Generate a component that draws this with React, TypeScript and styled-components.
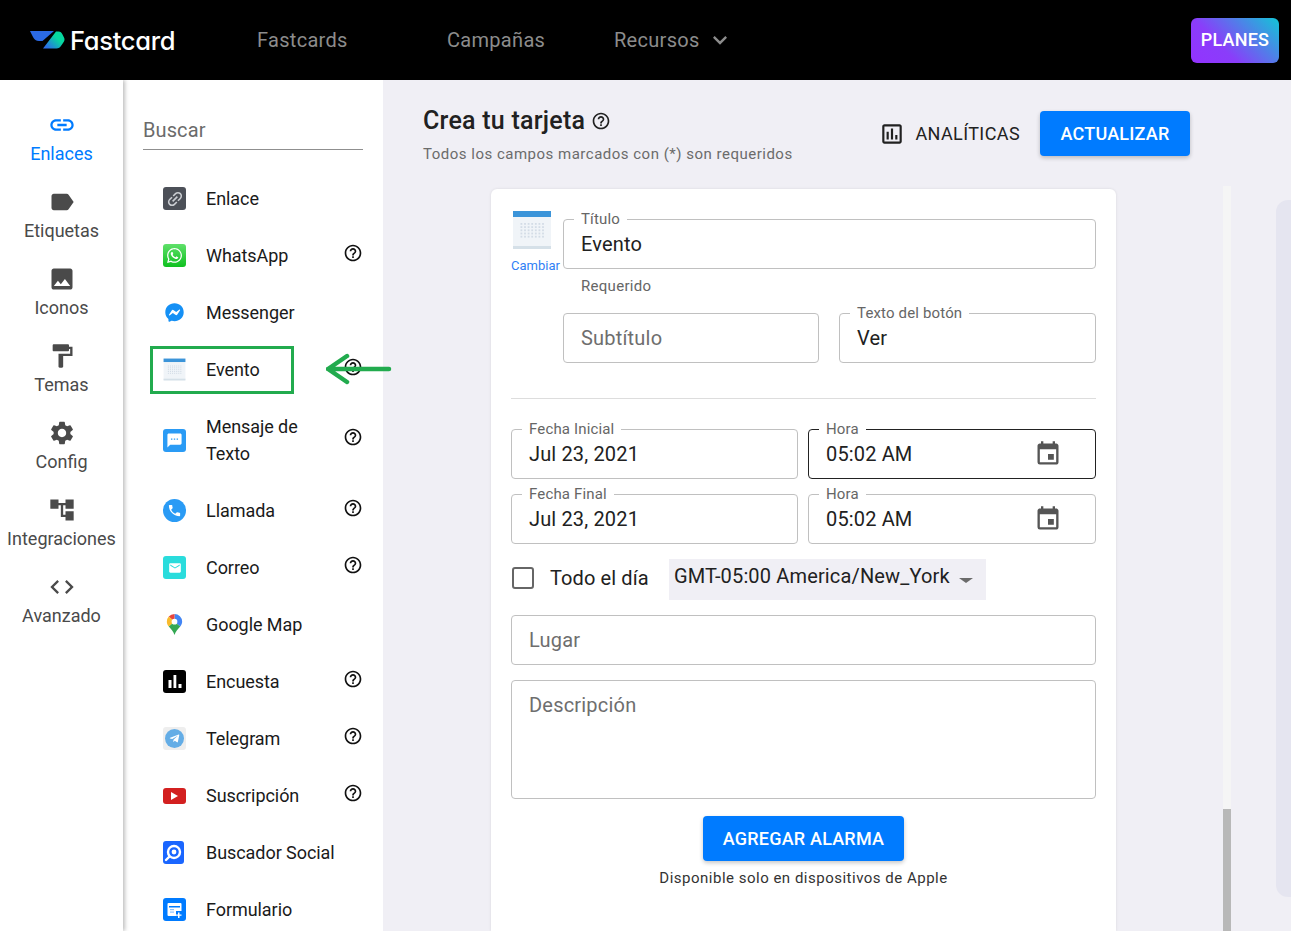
import styled, { createGlobalStyle } from "styled-components";
import type { ReactNode } from "react";
import {
  MdAccountTree,
  MdCode,
  MdEmail,
  MdEvent,
  MdExpandMore,
  MdFormatPaint,
  MdHelpOutline,
  MdImage,
  MdLabel,
  MdLink,
  MdOutlineAssessment,
  MdPhone,
  MdSettings,
  MdSms,
} from "react-icons/md";
import { FaFacebookMessenger, FaTelegramPlane, FaWhatsapp } from "react-icons/fa";

const GlobalStyle = createGlobalStyle`
  html, body {
    margin: 0;
    height: 100%;
    overflow: hidden;
  }
  body {
    font-family: Roboto, "Liberation Sans", sans-serif;
    background: #f0eff5;
    color: #212121;
  }
  * {
    box-sizing: border-box;
  }
`;

function Logo() {
  return (
    <svg width="35" height="18" viewBox="0 0 35 18">
      <defs>
        <linearGradient id="logoGrad" x1="0" y1="1" x2="1" y2="0.2">
          <stop offset="0.15" stopColor="#2b6fe8" />
          <stop offset="0.7" stopColor="#06d8a0" />
        </linearGradient>
      </defs>
      <path d="M0 0h24L12.500 10H9C6 10 4.500 8.500 3 6z" fill="#2b6ae6" />
      <path d="M13 17.500L26 .5h2.500c2 0 3 1 4 3 1 2 2 3.500 2 5 0 1.500-1 3-2.500 5-2 3-3.500 4-5.500 4z" fill="url(#logoGrad)" />
    </svg>
  );
}

function CalendarArt({ size }: { size: number }) {
  const dots = [];
  for (let r = 0; r < 5; r++) {
    for (let c = 0; c < 7; c++) {
      dots.push(<rect key={`${r}-${c}`} x={8.5 + c * 3.6} y={13 + r * 3.2} width="1.800" height="1.800" fill="#d3dce6" />);
    }
  }
  return (
    <svg width={size} height={size} viewBox="0 0 40 40">
      <rect x="1" y="1" width="38" height="38" fill="#f0f4f8" />
      <rect x="1" y="1" width="38" height="6" fill="#3b94d9" />
      <rect x="1" y="36" width="38" height="3" fill="#d5e0e8" />
      {dots}
    </svg>
  );
}

function MapPin() {
  return (
    <svg width="23" height="23" viewBox="0 0 24 24">
      <path d="M12 1a8 8 0 0 1 8 8c0 2-1 3.500-2 5l-6-5z" fill="#4285f4" />
      <path d="M12 1a8 8 0 0 0-6 2.700L12 9z" fill="#e8453c" />
      <path d="M6 3.700A8 8 0 0 0 4 9c0 2 .8 3.400 2 5l6-5z" fill="#f9bb2d" />
      <path d="M6 14c2 2.600 5 5 6 9 1-4 4-6.500 6-9l-6-5z" fill="#34a853" />
      <circle cx="12" cy="9" r="3" fill="#fff" />
    </svg>
  );
}

const LinkBadge = styled.span<{ $bg: string; $size?: number; $round?: boolean; $short?: boolean }>`
  width: 23px;
  height: ${(p) => (p.$short ? "16px" : "23px")};
  border-radius: ${(p) => (p.$round ? "50%" : "3px")};
  background: ${(p) => p.$bg};
  color: #fff;
  display: flex;
  align-items: center;
  justify-content: center;
  font-size: ${(p) => p.$size ?? 16}px;
`;

const LinkGlyph = styled(MdLink)`
  transform: rotate(-45deg);
  color: #c9ccd1;
`;

const TelegramDisc = styled.span`
  width: 19px;
  height: 19px;
  border-radius: 50%;
  background: #64ade6;
  color: #fff;
  display: flex;
  align-items: center;
  justify-content: center;
  font-size: 11px;
`;

const Triangle = styled.span`
  width: 0;
  height: 0;
  border-left: 7px solid #fff;
  border-top: 4px solid transparent;
  border-bottom: 4px solid transparent;
`;

const Bars = () => (
  <svg width="23" height="23" viewBox="0 0 23 23">
    <rect width="23" height="23" rx="3" fill="#000" />
    <rect x="5.500" y="10" width="3" height="8" fill="#fff" />
    <rect x="10.500" y="5" width="2.800" height="13" fill="#fff" />
    <rect x="15.500" y="14" width="3" height="4" fill="#fff" />
  </svg>
);

const SearchRing = () => (
  <svg width="21" height="23" viewBox="0 0 21 23">
    <rect width="21" height="23" rx="3" fill="#1a66ff" />
    <circle cx="11" cy="11" r="6" fill="none" stroke="#fff" strokeWidth="2.400" />
    <circle cx="11" cy="11" r="2.400" fill="#fff" />
    <path d="M6.500 15.500L3 19" stroke="#fff" strokeWidth="2.400" strokeLinecap="round" />
  </svg>
);

const FormGlyph = () => (
  <svg width="15" height="16" viewBox="0 0 15 16">
    <path d="M1.500 1h12a1 1 0 0 1 1 1v7H9v5H1.500a1 1 0 0 1-1-1V2a1 1 0 0 1 1-1z" fill="#fff" />
    <rect x="2" y="4" width="11" height="1.500" fill="#007bff" />
    <rect x="3" y="7" width="4" height="1.200" fill="#8cc2ff" />
    <rect x="3" y="9.500" width="4" height="1.200" fill="#8cc2ff" />
    <path d="M11 10.500h1.500v2h2v1.300h-2V16H11v-2.200H9v-1.300h2z" fill="#fff" />
  </svg>
);

type CardLink = { name: string; help?: boolean; marked?: boolean; icon: ReactNode };

const rail = [
  { name: "Enlaces", icon: <MdLink />, active: true },
  { name: "Etiquetas", icon: <MdLabel /> },
  { name: "Iconos", icon: <MdImage /> },
  { name: "Temas", icon: <MdFormatPaint /> },
  { name: "Config", icon: <MdSettings /> },
  { name: "Integraciones", icon: <MdAccountTree /> },
  { name: "Avanzado", icon: <MdCode /> },
];

const links: CardLink[] = [
  { name: "Enlace", icon: <LinkBadge $bg="#4c5058" $size={20}><LinkGlyph /></LinkBadge> },
  { name: "WhatsApp", help: true, icon: <LinkBadge $bg="linear-gradient(#5fe06a,#0fc01f)" $size={17}><FaWhatsapp /></LinkBadge> },
  { name: "Messenger", icon: <LinkBadge $bg="transparent" $size={19}><FaFacebookMessenger color="#1590f5" /></LinkBadge> },
  { name: "Evento", help: true, marked: true, icon: <CalendarArt size={23} /> },
  { name: "Mensaje de Texto", help: true, icon: <LinkBadge $bg="#2a9bf5" $size={17}><MdSms /></LinkBadge> },
  { name: "Llamada", help: true, icon: <LinkBadge $bg="#2a9bf5" $round $size={15}><MdPhone /></LinkBadge> },
  { name: "Correo", help: true, icon: <LinkBadge $bg="#2adcdc" $size={14}><MdEmail /></LinkBadge> },
  { name: "Google Map", icon: <MapPin /> },
  { name: "Encuesta", help: true, icon: <Bars /> },
  { name: "Telegram", help: true, icon: <LinkBadge $bg="#eeeeee"><TelegramDisc><FaTelegramPlane /></TelegramDisc></LinkBadge> },
  { name: "Suscripción", help: true, icon: <LinkBadge $bg="#d32020" $short><Triangle /></LinkBadge> },
  { name: "Buscador Social", icon: <SearchRing /> },
  { name: "Formulario", icon: <LinkBadge $bg="#007bff"><FormGlyph /></LinkBadge> },
];

export default function App() {
  return (
    <Page>
      <GlobalStyle />
      <TopBar>
        <Brand>
          <Logo />
          <BrandName>Fastcard</BrandName>
        </Brand>
        <NavItem $width={190}>Fastcards</NavItem>
        <NavItem $width={167}>Campañas</NavItem>
        <NavItem>
          Recursos
          <MdExpandMore size={28} />
        </NavItem>
        <Plans>PLANES</Plans>
      </TopBar>

      <Body>
        <Rail>
          {rail.map((item) => (
            <RailItem key={item.name} $active={item.active}>
              {item.icon}
              <span>{item.name}</span>
            </RailItem>
          ))}
        </Rail>

        <LinkPanel>
          <Search>Buscar</Search>
          {links.map((link) => (
            <LinkRow key={link.name}>
              <LinkIcon>{link.icon}</LinkIcon>
              <LinkName>{link.name}</LinkName>
              {link.help && <RowHelp />}
              {link.marked && (
                <>
                  <MarkBox />
                  <MarkArrow width="66" height="32" viewBox="0 0 66 32">
                    <path
                      d="M63 16H2M2 16L21 3M2 16l19 13"
                      fill="none"
                      stroke="#22ab4e"
                      strokeWidth="4.500"
                      strokeLinecap="round"
                    />
                  </MarkArrow>
                </>
              )}
            </LinkRow>
          ))}
        </LinkPanel>

        <Main>
          <Editor>
            <EditorHead>
              <div>
                <Title>
                  Crea tu tarjeta
                  <MdHelpOutline size={20} />
                </Title>
                <Hint>Todos los campos marcados con (*) son requeridos</Hint>
              </div>
              <Actions>
                <Analytics>
                  <MdOutlineAssessment size={26} />
                  ANALÍTICAS
                </Analytics>
                <PrimaryButton $width={150}>ACTUALIZAR</PrimaryButton>
              </Actions>
            </EditorHead>

            <EditorScroll>
              <Card>
                <TitleBlock>
                  <IconPicker>
                    <CalendarArt size={40} />
                    <span>Cambiar</span>
                  </IconPicker>
                  <TitleFields>
                    <Field $label="Título">
                      <Value>Evento</Value>
                    </Field>
                    <Helper>Requerido</Helper>
                    <TwoCols>
                      <Field>
                        <Placeholder>Subtítulo</Placeholder>
                      </Field>
                      <Field $label="Texto del botón">
                        <Value>Ver</Value>
                      </Field>
                    </TwoCols>
                  </TitleFields>
                </TitleBlock>

                <Divider />

                <FormStack>
                  <DateGrid>
                    <Field $label="Fecha Inicial">
                      <Value>Jul 23, 2021</Value>
                    </Field>
                    <Field $label="Hora" $focused>
                      <Value>05:02 AM</Value>
                      <MdEvent size={28} color="#555" />
                    </Field>
                    <Field $label="Fecha Final">
                      <Value>Jul 23, 2021</Value>
                    </Field>
                    <Field $label="Hora">
                      <Value>05:02 AM</Value>
                      <MdEvent size={28} color="#555" />
                    </Field>
                  </DateGrid>

                  <AllDayRow>
                    <CheckBox />
                    <AllDayLabel>Todo el día</AllDayLabel>
                    <TimezoneSelect>
                      GMT-05:00 America/New_York
                      <Caret />
                    </TimezoneSelect>
                  </AllDayRow>

                  <Field>
                    <Placeholder>Lugar</Placeholder>
                  </Field>
                  <TextArea>
                    <Placeholder>Descripción</Placeholder>
                  </TextArea>
                </FormStack>

                <AlarmBlock>
                  <PrimaryButton $width={201}>AGREGAR ALARMA</PrimaryButton>
                  <AlarmNote>Disponible solo en dispositivos de Apple</AlarmNote>
                </AlarmBlock>
              </Card>
              <ScrollTrack>
                <ScrollThumb />
              </ScrollTrack>
            </EditorScroll>
          </Editor>
          <Preview />
        </Main>
      </Body>
    </Page>
  );
}

function Field({ $label, $focused, children }: { $label?: string; $focused?: boolean; children: ReactNode }) {
  return (
    <FieldBox $focused={$focused}>
      {$label && <FieldLabel>{$label}</FieldLabel>}
      {children}
    </FieldBox>
  );
}

// Style
const Page = styled.div`
  height: 100vh;
  display: flex;
  flex-direction: column;
  overflow: hidden;
`;

const TopBar = styled.header`
  height: 80px;
  flex: none;
  background: #000;
  display: flex;
  align-items: center;
  padding: 0 12px 0 30px;
`;

const Brand = styled.div`
  width: 227px;
  display: flex;
  align-items: center;
  gap: 5px;
`;

const BrandName = styled.span`
  font-family: Inter, sans-serif;
  font-feature-settings: "cv11";
  font-size: 25.500px;
  font-weight: 500;
  letter-spacing: -0.3px;
  color: #fff;
`;

const NavItem = styled.div<{ $width?: number }>`
  width: ${(p) => (p.$width ? `${p.$width}px` : "auto")};
  display: flex;
  align-items: center;
  gap: 6px;
  font-size: 20px;
  letter-spacing: 0.3px;
  color: #8c8c8c;
`;

const Plans = styled.div`
  margin-left: auto;
  width: 88px;
  height: 45px;
  padding-bottom: 2px;
  border-radius: 6px;
  background: linear-gradient(45deg, #9333ff 0%, #8a3dfa 35%, #12c6d6 100%);
  color: #fff;
  font-size: 18px;
  font-weight: 500;
  letter-spacing: 0.2px;
  display: flex;
  align-items: center;
  justify-content: center;
`;

const Body = styled.div`
  flex: 1;
  min-height: 0;
  display: flex;
`;

const Rail = styled.nav`
  width: 123px;
  flex: none;
  background: #fff;
  padding-top: 33px;
  box-shadow: 2px 0 4px rgba(0, 0, 0, 0.25);
  position: relative;
  z-index: 2;
`;

const RailItem = styled.div<{ $active?: boolean }>`
  height: 77px;
  display: flex;
  flex-direction: column;
  align-items: center;
  color: ${(p) => (p.$active ? "#007bff" : "#4a4a4a")};
  font-size: 18px;
  line-height: 24px;

  svg {
    width: 28px;
    height: 28px;
    margin: -2px 0 3px;
  }
`;

const LinkPanel = styled.aside`
  width: 260px;
  flex: none;
  position: relative;
  z-index: 1;
  background: #fff;
  padding: 0 20px;
`;

const Search = styled.div`
  height: 47px;
  margin: 23px 0 20px;
  padding-top: 13px;
  border-bottom: 1px solid #8f8f8f;
  font-size: 20px;
  line-height: 28px;
  letter-spacing: 0.1px;
  color: #6b6b6b;
`;

const LinkRow = styled.div`
  position: relative;
  display: flex;
  align-items: center;
  padding: 15px 0 15px 20px;
`;

const LinkIcon = styled.div`
  width: 43px;
  flex: none;
  display: flex;
  align-items: center;
`;

const LinkName = styled.div`
  flex: 1;
  font-size: 18px;
  line-height: 27px;
  letter-spacing: -0.06px;
  color: #1a1a1a;
`;

const RowHelp = styled(MdHelpOutline)`
  width: 20px;
  height: 20px;
  flex: none;
  margin: 0 0 6px 16px;
  color: #111;
`;

const MarkBox = styled.div`
  position: absolute;
  left: 7px;
  top: 5px;
  width: 144px;
  height: 48px;
  border: 3px solid #22ab4e;
`;

const MarkArrow = styled.svg`
  position: absolute;
  left: 183px;
  top: 12px;
`;

const Main = styled.main`
  flex: 1;
  min-width: 0;
  display: flex;
`;

const Editor = styled.section`
  width: 848px;
  flex: none;
  display: flex;
  flex-direction: column;
`;

const EditorHead = styled.div`
  height: 106px;
  flex: none;
  width: 767px;
  margin-left: 40px;
  padding-top: 25px;
  display: flex;
  justify-content: space-between;
  align-items: flex-start;
`;

const Title = styled.h1`
  margin: 0;
  font-size: 25px;
  line-height: 32px;
  font-weight: 500;
  letter-spacing: 0.25px;
  display: flex;
  align-items: center;
  gap: 6px;
`;

const Hint = styled.p`
  margin: 7px 0 0;
  font-size: 15px;
  line-height: 20px;
  letter-spacing: 0.5px;
  color: #6b6b6b;
`;

const Actions = styled.div`
  display: flex;
  align-items: center;
  margin-top: 6px;
  gap: 20px;
`;

const Analytics = styled.div`
  display: flex;
  align-items: center;
  gap: 10px;
  font-size: 18px;
  letter-spacing: 0.4px;
  color: #212121;
`;

const PrimaryButton = styled.button<{ $width: number }>`
  width: ${(p) => p.$width}px;
  height: 45px;
  border: 0;
  border-radius: 4px;
  background: #007bff;
  color: #fff;
  font: 500 18px Roboto, sans-serif;
  letter-spacing: 0.2px;
  box-shadow: 0 2px 4px rgba(0, 0, 0, 0.22);
`;

const EditorScroll = styled.div`
  flex: 1;
  min-height: 0;
  display: flex;
  justify-content: space-between;
  padding-left: 108px;
`;

const Card = styled.div`
  width: 625px;
  margin-top: 3px;
  padding: 30px 20px 0;
  background: #fff;
  border-radius: 6px 6px 0 0;
  box-shadow: 0 0 3px rgba(0, 0, 0, 0.1);
`;

const TitleBlock = styled.div`
  display: flex;
`;

const IconPicker = styled.div`
  width: 52px;
  flex: none;
  margin-top: -9px;
  display: flex;
  flex-direction: column;

  span {
    margin-top: 8px;
    font-size: 13px;
    line-height: 16px;
    color: #2f80f5;
    white-space: nowrap;
  }
  svg {
    margin-left: 1px;
  }
`;

const TitleFields = styled.div`
  flex: 1;
`;

const FieldBox = styled.div<{ $focused?: boolean }>`
  position: relative;
  height: 50px;
  display: flex;
  align-items: center;
  justify-content: space-between;
  padding: 0 33px 0 17px;
  border: 1px solid ${(p) => (p.$focused ? "#222" : "#c0c0c0")};
  border-radius: 4px;
`;

const FieldLabel = styled.span`
  position: absolute;
  left: 10px;
  top: -10px;
  padding: 0 7px;
  background: #fff;
  font-size: 15px;
  line-height: 18px;
  letter-spacing: 0.15px;
  color: #666;
`;

const Value = styled.span`
  font-size: 20px;
  letter-spacing: 0.15px;
  color: #212121;
`;

const Placeholder = styled.span`
  font-size: 20px;
  letter-spacing: 0.2px;
  color: #6e6e6e;
`;

const Helper = styled.div`
  height: 44px;
  padding-left: 18px;
  font-size: 15px;
  line-height: 34px;
  letter-spacing: 0.3px;
  color: #666;
`;

const TwoCols = styled.div`
  display: grid;
  grid-template-columns: 256px 1fr;
  gap: 20px;
`;

const Divider = styled.hr`
  margin: 35px 0 30px;
  border: 0;
  border-top: 1px solid #ddd;
`;

const FormStack = styled.div`
  display: flex;
  flex-direction: column;
  gap: 15px;
`;

const DateGrid = styled.div`
  display: grid;
  grid-template-columns: 287px 288px;
  gap: 15px 10px;
`;

const AllDayRow = styled.div`
  height: 41px;
  display: flex;
  align-items: center;
`;

const CheckBox = styled.span`
  width: 22px;
  height: 22px;
  margin: 0 0 4px 1px;
  border: 2px solid #666;
  border-radius: 3px;
`;

const AllDayLabel = styled.span`
  width: 119px;
  margin: 0 0 4px 16px;
  font-size: 20px;
  letter-spacing: 0.1px;
  color: #212121;
`;

const TimezoneSelect = styled.div`
  width: 317px;
  height: 41px;
  padding: 0 0 7px 5px;
  background: #f0eff5;
  display: flex;
  align-items: center;
  font-size: 20px;
  letter-spacing: 0.15px;
  color: #212121;
`;

const Caret = styled.span`
  margin: 9px 0 0 9px;
  border-top: 5px solid #6b6b6b;
  border-left: 7px solid transparent;
  border-right: 7px solid transparent;
`;

const TextArea = styled.div`
  height: 119px;
  padding: 12px 17px;
  border: 1px solid #c0c0c0;
  border-radius: 4px;
`;

const AlarmBlock = styled.div`
  margin-top: 17px;
  display: flex;
  flex-direction: column;
  align-items: center;
`;

const AlarmNote = styled.div`
  margin-top: 7px;
  font-size: 15px;
  line-height: 20px;
  letter-spacing: 0.5px;
  color: #333;
`;

const ScrollTrack = styled.div`
  width: 8px;
  flex: none;
  background: #f5f5f5;
`;

const ScrollThumb = styled.div`
  height: 122px;
  margin-top: 623px;
  background: #b8b8b8;
`;

const Preview = styled.div`
  flex: 1;
  height: 697px;
  margin: 120px 0 0 45px;
  background: #e5e5f0;
  border-radius: 12px 0 0 12px;
`;
